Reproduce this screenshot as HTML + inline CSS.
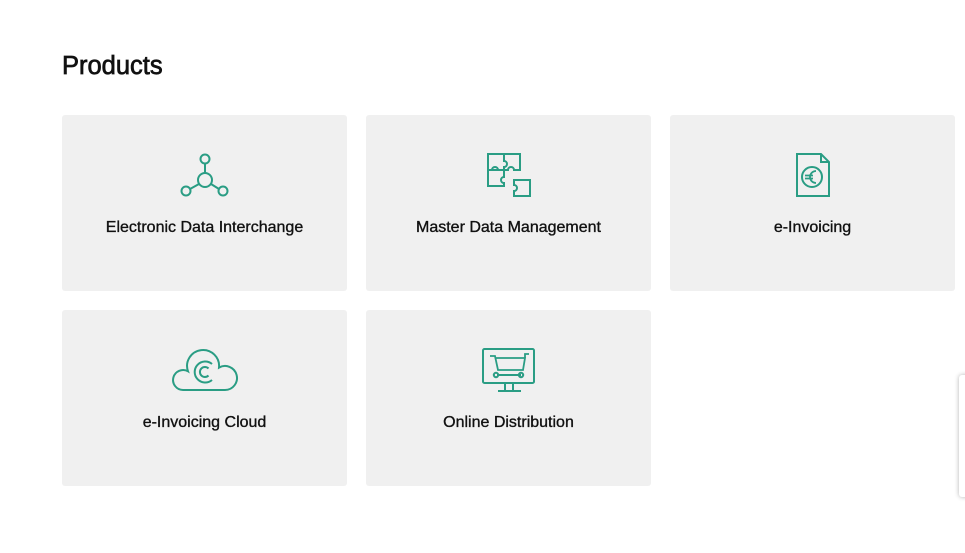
<!DOCTYPE html>
<html><head><style>
body{margin:0;width:965px;height:553px;background:#fff;font-family:"Liberation Sans",Arial,sans-serif;position:relative;overflow:hidden}
h1{position:absolute;left:62px;top:52px;margin:0;font-size:25.5px;font-weight:normal;-webkit-text-stroke:0.7px #111;color:#111}
.c{position:absolute;width:285px;height:176px;background:#f0f0f0;border-radius:3px}
.c span{position:absolute;left:0;right:0;top:104px;text-align:center;font-size:16px;color:#111;-webkit-text-stroke:0.35px #111}
svg{position:absolute;fill:none;stroke:#2a9d84;stroke-width:2}
.w{position:absolute;left:959px;top:375px;width:20px;height:122px;background:#fff;box-shadow:0 0 5px rgba(0,0,0,.3);border-radius:3px}
</style></head><body>
<h1>Products</h1>
<div class="c" style="left:62px;top:115px"><span>Electronic Data Interchange</span></div>
<div class="c" style="left:366px;top:115px"><span>Master Data Management</span></div>
<div class="c" style="left:670px;top:115px"><span>e-Invoicing</span></div>
<div class="c" style="left:62px;top:310px"><span>e-Invoicing Cloud</span></div>
<div class="c" style="left:366px;top:310px"><span>Online Distribution</span></div>
<svg style="left:175px;top:150px" width="60" height="50" viewBox="175 150 60 50">
<circle cx="205" cy="159" r="4.5"/><circle cx="205" cy="180" r="7"/><circle cx="186" cy="191" r="4.5"/><circle cx="223" cy="191" r="4.5"/>
<path d="M205 163.5V173M199 184L190 189M211 184L219 189"/></svg>
<svg style="left:480px;top:150px" width="55" height="50" viewBox="480 150 55 50">
<path d="M488 154H504V161a3 3 0 0 1 0 6V170H488Z"/><path d="M504 154H520V170H514a3 3 0 0 0-6 0H504"/><path d="M488 170H504V177a3 3 0 0 0 0 6V186H488Z"/><path d="M514 180H530V196H514V191a3 3 0 0 0 0-6Z"/><path d="M488 170h4a3 3 0 0 1 6 0"/></svg>
<svg style="left:790px;top:150px" width="45" height="50" viewBox="790 150 45 50">
<path d="M797 154H821L829 162V196H797Z"/><path d="M821 154V162H829"/><circle cx="812" cy="177" r="10"/>
<path d="M816 171a6 6 0 1 0 0 12M805 175.5h8M805 178.5h8" stroke-width="1.8"/></svg>
<svg style="left:165px;top:342px" width="80" height="55" viewBox="165 342 80 55">
<path d="M183 390A10 10 0 1 1 188 371.3A16 16 0 1 1 219 367.6A12 12 0 1 1 225 390Z"/>
<path d="M212 364A10.5 10.5 0 1 0 212 380"/><path d="M208.5 368.5A5 5 0 1 0 208.5 375.5"/></svg>
<svg style="left:478px;top:345px" width="62" height="50" viewBox="478 345 62 50">
<rect x="483" y="349" width="51" height="34" rx="1.5"/><path d="M505 383V391M513 383V391M498 391H521"/>
<path d="M490 356H495L498 370H523L525 358H496M525 358V354H529" stroke-width="1.8"/><path d="M497 375H521"/><circle cx="496" cy="375" r="2.2"/><circle cx="521" cy="375" r="2.2"/></svg>
<div class="w"></div>
</body></html>
